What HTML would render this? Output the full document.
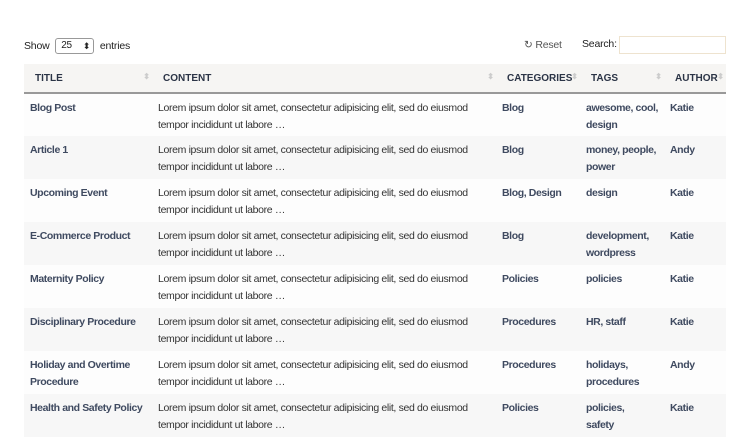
<!DOCTYPE html>
<html><head><style>
body{margin:0;width:750px;height:422px;overflow:hidden;background:#fff;font-family:"Liberation Sans",sans-serif;font-size:10.5px;color:#333}
.top{position:absolute;top:38px;left:24px;font-size:10.5px;color:#222;letter-spacing:-0.2px}
.sel{display:inline-block;border:1px solid #999;border-radius:3px;vertical-align:middle;margin:0 3px;position:relative;font-size:10px;line-height:14px;padding-left:5px;box-sizing:border-box;width:39px;height:16px}
.sel:after{content:"⬍";position:absolute;right:3px;top:0;font-size:9px}
.reset{position:absolute;left:524px;top:39px;color:#555;font-size:10.5px;letter-spacing:-0.2px}
.search{position:absolute;left:582px;top:38px;color:#222;letter-spacing:-0.2px}
.inp{position:absolute;left:619px;top:36px;width:107px;height:18px;border:1px solid #eee3cf;box-sizing:border-box}
table{position:absolute;left:24px;top:64px;width:702px;border-collapse:collapse;table-layout:fixed}
th{background:#f6f5f3;height:28px;text-align:left;font-size:10px;font-weight:bold;color:#2b3446;border-bottom:2px solid #999;padding:0 0 0 11px;position:relative;letter-spacing:0px;white-space:nowrap}
th:after{content:"⬍";position:absolute;right:2px;top:8px;color:#ccc;font-size:8px}
td{vertical-align:top;padding:6px 6px 0;height:43px;line-height:17px;font-size:10.5px;letter-spacing:-0.35px;box-sizing:border-box}
td.b{font-weight:bold;color:#3f4a60;letter-spacing:-0.4px}
tr:nth-child(even) td{background:#f7f7f7}
tr:nth-child(odd) td{background:#fdfdfd}
</style></head><body>
<div class="top">Show <span class="sel">25</span> entries</div>
<div class="reset">↻ Reset</div>
<div class="search">Search:</div>
<div class="inp"></div>
<table>
<colgroup><col style="width:128px"><col style="width:344px"><col style="width:84px"><col style="width:84px"><col style="width:62px"></colgroup>
<thead><tr><th>TITLE</th><th>CONTENT</th><th>CATEGORIES</th><th>TAGS</th><th>AUTHOR</th></tr></thead>
<tbody>
<tr><td class="b">Blog Post</td><td>Lorem ipsum dolor sit amet, consectetur adipisicing elit, sed do eiusmod<br>tempor incididunt ut labore …</td><td class="b">Blog</td><td class="b">awesome, cool,<br>design</td><td class="b">Katie</td></tr>
<tr><td class="b">Article 1</td><td>Lorem ipsum dolor sit amet, consectetur adipisicing elit, sed do eiusmod<br>tempor incididunt ut labore …</td><td class="b">Blog</td><td class="b">money, people,<br>power</td><td class="b">Andy</td></tr>
<tr><td class="b">Upcoming Event</td><td>Lorem ipsum dolor sit amet, consectetur adipisicing elit, sed do eiusmod<br>tempor incididunt ut labore …</td><td class="b">Blog, Design</td><td class="b">design</td><td class="b">Katie</td></tr>
<tr><td class="b">E-Commerce Product</td><td>Lorem ipsum dolor sit amet, consectetur adipisicing elit, sed do eiusmod<br>tempor incididunt ut labore …</td><td class="b">Blog</td><td class="b">development,<br>wordpress</td><td class="b">Katie</td></tr>
<tr><td class="b">Maternity Policy</td><td>Lorem ipsum dolor sit amet, consectetur adipisicing elit, sed do eiusmod<br>tempor incididunt ut labore …</td><td class="b">Policies</td><td class="b">policies</td><td class="b">Katie</td></tr>
<tr><td class="b">Disciplinary Procedure</td><td>Lorem ipsum dolor sit amet, consectetur adipisicing elit, sed do eiusmod<br>tempor incididunt ut labore …</td><td class="b">Procedures</td><td class="b">HR, staff</td><td class="b">Katie</td></tr>
<tr><td class="b">Holiday and Overtime<br>Procedure</td><td>Lorem ipsum dolor sit amet, consectetur adipisicing elit, sed do eiusmod<br>tempor incididunt ut labore …</td><td class="b">Procedures</td><td class="b">holidays,<br>procedures</td><td class="b">Andy</td></tr>
<tr><td class="b" style="white-space:nowrap">Health and Safety Policy</td><td>Lorem ipsum dolor sit amet, consectetur adipisicing elit, sed do eiusmod<br>tempor incididunt ut labore …</td><td class="b">Policies</td><td class="b">policies,<br>safety</td><td class="b">Katie</td></tr>
</tbody></table>
</body></html>
